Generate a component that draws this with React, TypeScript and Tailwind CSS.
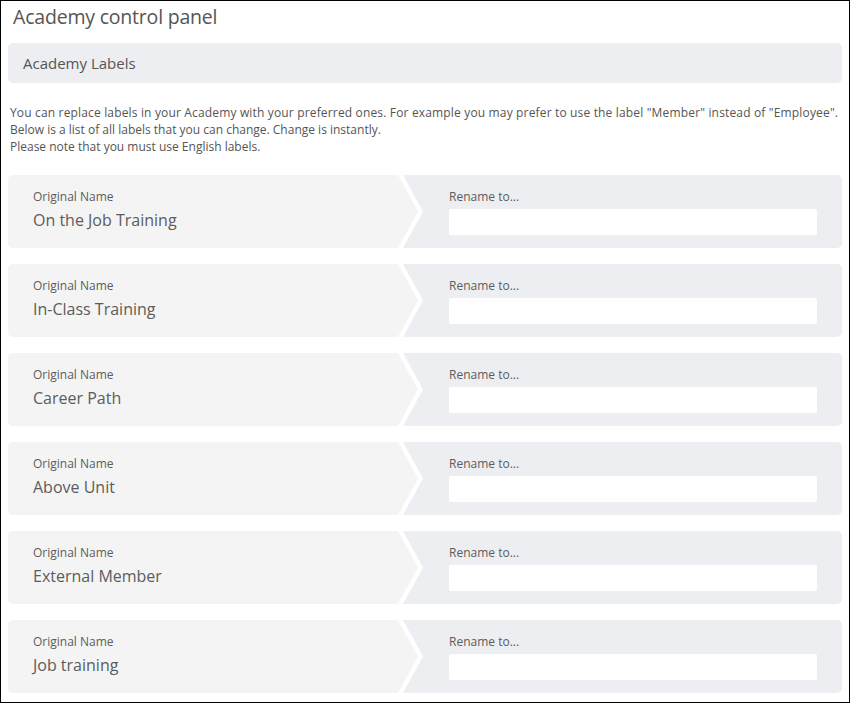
const LABELS = [
  "On the Job Training",
  "In-Class Training",
  "Career Path",
  "Above Unit",
  "External Member",
  "Job training",
];

function LabelRow({ name }: { name: string }) {
  return (
    <div className="flex h-[73px] rounded-[5px] overflow-hidden bg-[#edeef1]">
      <div className="relative w-[415px] shrink-0 bg-white [clip-path:polygon(0_0,395px_0,415px_50%,395px_100%,0_100%)]">
        <div className="h-full pl-[25px] pt-[13px] bg-[#f4f4f4] [clip-path:polygon(0_0,390px_0,410px_50%,390px_100%,0_100%)]">
          <div className="text-[12px] leading-[18px] text-[#5c5c5c]">Original Name</div>
          <div className="mt-[3px] text-[16px] leading-[22px] text-[#5c5c5c]">{name}</div>
        </div>
      </div>
      <div className="flex-1 pl-[26px] pr-[25px] pt-[13px]">
        <div className="text-[12px] leading-[18px] text-[#5c5c5c]">Rename to...</div>
        <input
          type="text"
          className="mt-[3px] block w-full h-[26px] rounded-[2px] bg-white outline-none px-2 text-[13px]"
        />
      </div>
    </div>
  );
}

export default function App() {
  return (
    <div className="w-[850px] h-[703px] border border-black bg-white px-[7px] font-['Open_Sans',sans-serif] overflow-hidden">
      <h1 className="pl-[5px] h-[28px] text-[19.5px] leading-[31px] tracking-[-0.2px] text-[#555] font-normal">
        Academy control panel
      </h1>
      <div className="mt-[14px] h-[40px] flex items-center px-[15px] rounded-[5px] bg-[#edeef1] text-[15px] text-[#555]">
        Academy Labels
      </div>
      <div className="mt-[21px] pl-[2px] text-[12px] leading-[17px] text-[#555]">
        <p className="tracking-[0.16px]">
          You can replace labels in your Academy with your preferred ones. For example you may prefer to use the
          label "Member" instead of "Employee".
        </p>
        <p>Below is a list of all labels that you can change. Change is instantly.</p>
        <p>Please note that you must use English labels.</p>
      </div>
      <div className="mt-[20px] flex flex-col gap-[16px]">
        {LABELS.map((label) => (
          <LabelRow key={label} name={label} />
        ))}
      </div>
    </div>
  );
}
